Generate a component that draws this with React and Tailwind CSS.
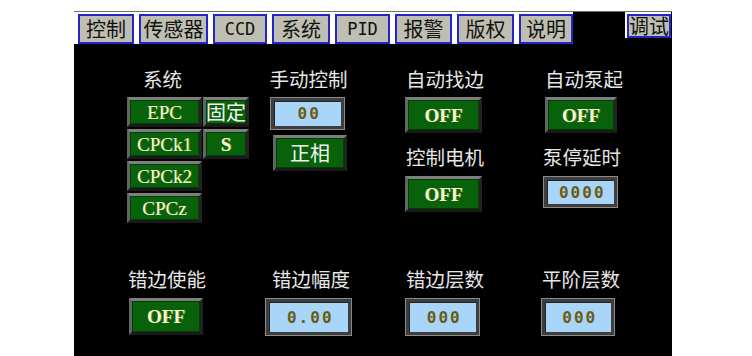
import React from "react";

const CJK = "font-['Noto_Sans_CJK_SC',sans-serif]";

function Tab({ w, children, mono }) {
  return (
    <div
      className={`h-[30px] border-2 border-[#2424c8] bg-[#bebeb2] flex items-center justify-center text-[#111] leading-none whitespace-nowrap ${
        mono ? "font-['DejaVu_Sans_Mono',monospace] text-[17px]" : `${CJK} text-[20px]`
      }`}
      style={{ width: w }}
    >
      {children}
    </div>
  );
}

function Label({ children, className = "" }) {
  return (
    <div
      className={`h-[20px] leading-[20px] text-[19.5px] text-[#e6e6e6] whitespace-nowrap ${CJK} ${className}`}
    >
      {children}
    </div>
  );
}

function GBtn({ className = "", children, bold, cjk }) {
  return (
    <div
      className={`flex items-center justify-center overflow-hidden whitespace-nowrap border-[3px] border-t-[#7e7e7e] border-l-[#646464] border-r-[#242424] border-b-[#1a1a1a] bg-[#08620a] shadow-[inset_0_0_0_1px_#043c04] ${className}`}
    >
      <span
        className={`leading-none ${
          cjk
            ? `${CJK} text-[20px] text-[#f4f4f4]`
            : `font-['Liberation_Serif',serif] text-[19px] text-[#fbf6d6] [text-shadow:1px_0_0_rgba(200,170,40,0.45)] ${
                bold ? "font-bold" : ""
              }`
        }`}
      >
        {children}
      </span>
    </div>
  );
}

function NBox({ className = "", children }) {
  return (
    <div className={`border border-[#8a8a8a] bg-[#3e3e3e] p-[3px] ${className}`}>
      <div className="w-full h-full bg-[#a8d5f8] border-t border-l border-[#222] flex items-center justify-center overflow-hidden">
        <span className="pl-[2.5px] font-['DejaVu_Sans_Mono',monospace] font-bold text-[16px] leading-none tracking-[2px] text-[#6b5b12]">
          {children}
        </span>
      </div>
    </div>
  );
}

export default function App() {
  return (
    <div className="w-[752px] h-[356px] bg-white pl-[74px] pt-[11px] overflow-hidden">
      <div className="w-[598px] h-[345px] bg-black flex flex-col border-t border-[#6e6e6e]">
        {/* tab bar */}
        <div className="flex h-[32px] shrink-0">
          <div className="flex bg-white pl-[4px] pt-[2px] gap-[5px]">
            <Tab w={56}>控制</Tab>
            <Tab w={69}>传感器</Tab>
            <Tab w={54} mono>CCD</Tab>
            <Tab w={58}>系统</Tab>
            <Tab w={55} mono>PID</Tab>
            <Tab w={57}>报警</Tab>
            <Tab w={57}>版权</Tab>
            <Tab w={54}>说明</Tab>
          </div>
          <div className="flex-1" />
          <div className="mr-[1px] h-[26px] border-l-2 border-t-2 border-white">
            <div className={`w-[44px] h-[24px] border-2 border-[#2424c8] bg-[#bebeb2] flex items-center justify-center text-[#111] leading-none whitespace-nowrap ${CJK} text-[20px]`}>
              调试
            </div>
          </div>
        </div>

        {/* top section */}
        <div className="flex h-[216px] shrink-0 pt-[25px]">
          {/* col 1 */}
          <div className="ml-[53px] w-[122px] flex flex-col">
            <Label className="pl-[16px]">系统</Label>
            <div className="mt-[8px] grid grid-cols-[75px_46px] gap-x-[1px] gap-y-[2px] auto-rows-[30px]">
              <GBtn>EPC</GBtn>
              <GBtn cjk>固定</GBtn>
              <GBtn>CPCk1</GBtn>
              <GBtn bold>S</GBtn>
              <GBtn>CPCk2</GBtn>
              <div />
              <GBtn>CPCz</GBtn>
            </div>
          </div>
          {/* col 2 */}
          <div className="ml-[16px] w-[87px] flex flex-col">
            <Label className="text-center">手动控制</Label>
            <NBox className="mt-[8px] ml-[5px] w-[75px] h-[33px]">00</NBox>
            <GBtn cjk className="mt-[5px] ml-[8px] w-[74px] h-[36px]">
              正相
            </GBtn>
          </div>
          {/* col 3 */}
          <div className="ml-[53px] w-[80px] flex flex-col">
            <Label className="text-center">自动找边</Label>
            <GBtn bold className="mt-[8px] w-[77px] h-[36px]">
              OFF
            </GBtn>
            <Label className="mt-[14px] text-center">控制电机</Label>
            <GBtn bold className="mt-[9px] w-[77px] h-[36px]">
              OFF
            </GBtn>
          </div>
          {/* col 4 */}
          <div className="ml-[55px] w-[82px] flex flex-col">
            <Label className="pl-[5px]">自动泵起</Label>
            <GBtn bold className="mt-[8px] ml-[5px] w-[72px] h-[36px]">
              OFF
            </GBtn>
            <Label className="mt-[14px] pl-[3px]">泵停延时</Label>
            <NBox className="mt-[9px] ml-[3px] w-[75px] h-[32px]">0000</NBox>
          </div>
        </div>

        {/* bottom section */}
        <div className="flex pt-[9px]">
          <div className="ml-[53px] w-[122px] flex flex-col">
            <Label className="pl-[1px]">错边使能</Label>
            <GBtn bold className="mt-[9px] ml-[2px] w-[74px] h-[37px]">
              OFF
            </GBtn>
          </div>
          <div className="ml-[16px] w-[87px] flex flex-col">
            <Label className="pl-[7px]">错边幅度</Label>
            <NBox className="mt-[9px] w-[87px] h-[38px]">0.00</NBox>
          </div>
          <div className="ml-[53px] w-[80px] flex flex-col">
            <Label className="text-center">错边层数</Label>
            <NBox className="mt-[9px] w-[75px] h-[38px]">000</NBox>
          </div>
          <div className="ml-[55px] w-[82px] flex flex-col">
            <Label className="text-center">平阶层数</Label>
            <NBox className="mt-[9px] ml-[1px] w-[74px] h-[38px]">000</NBox>
          </div>
        </div>
      </div>
    </div>
  );
}
